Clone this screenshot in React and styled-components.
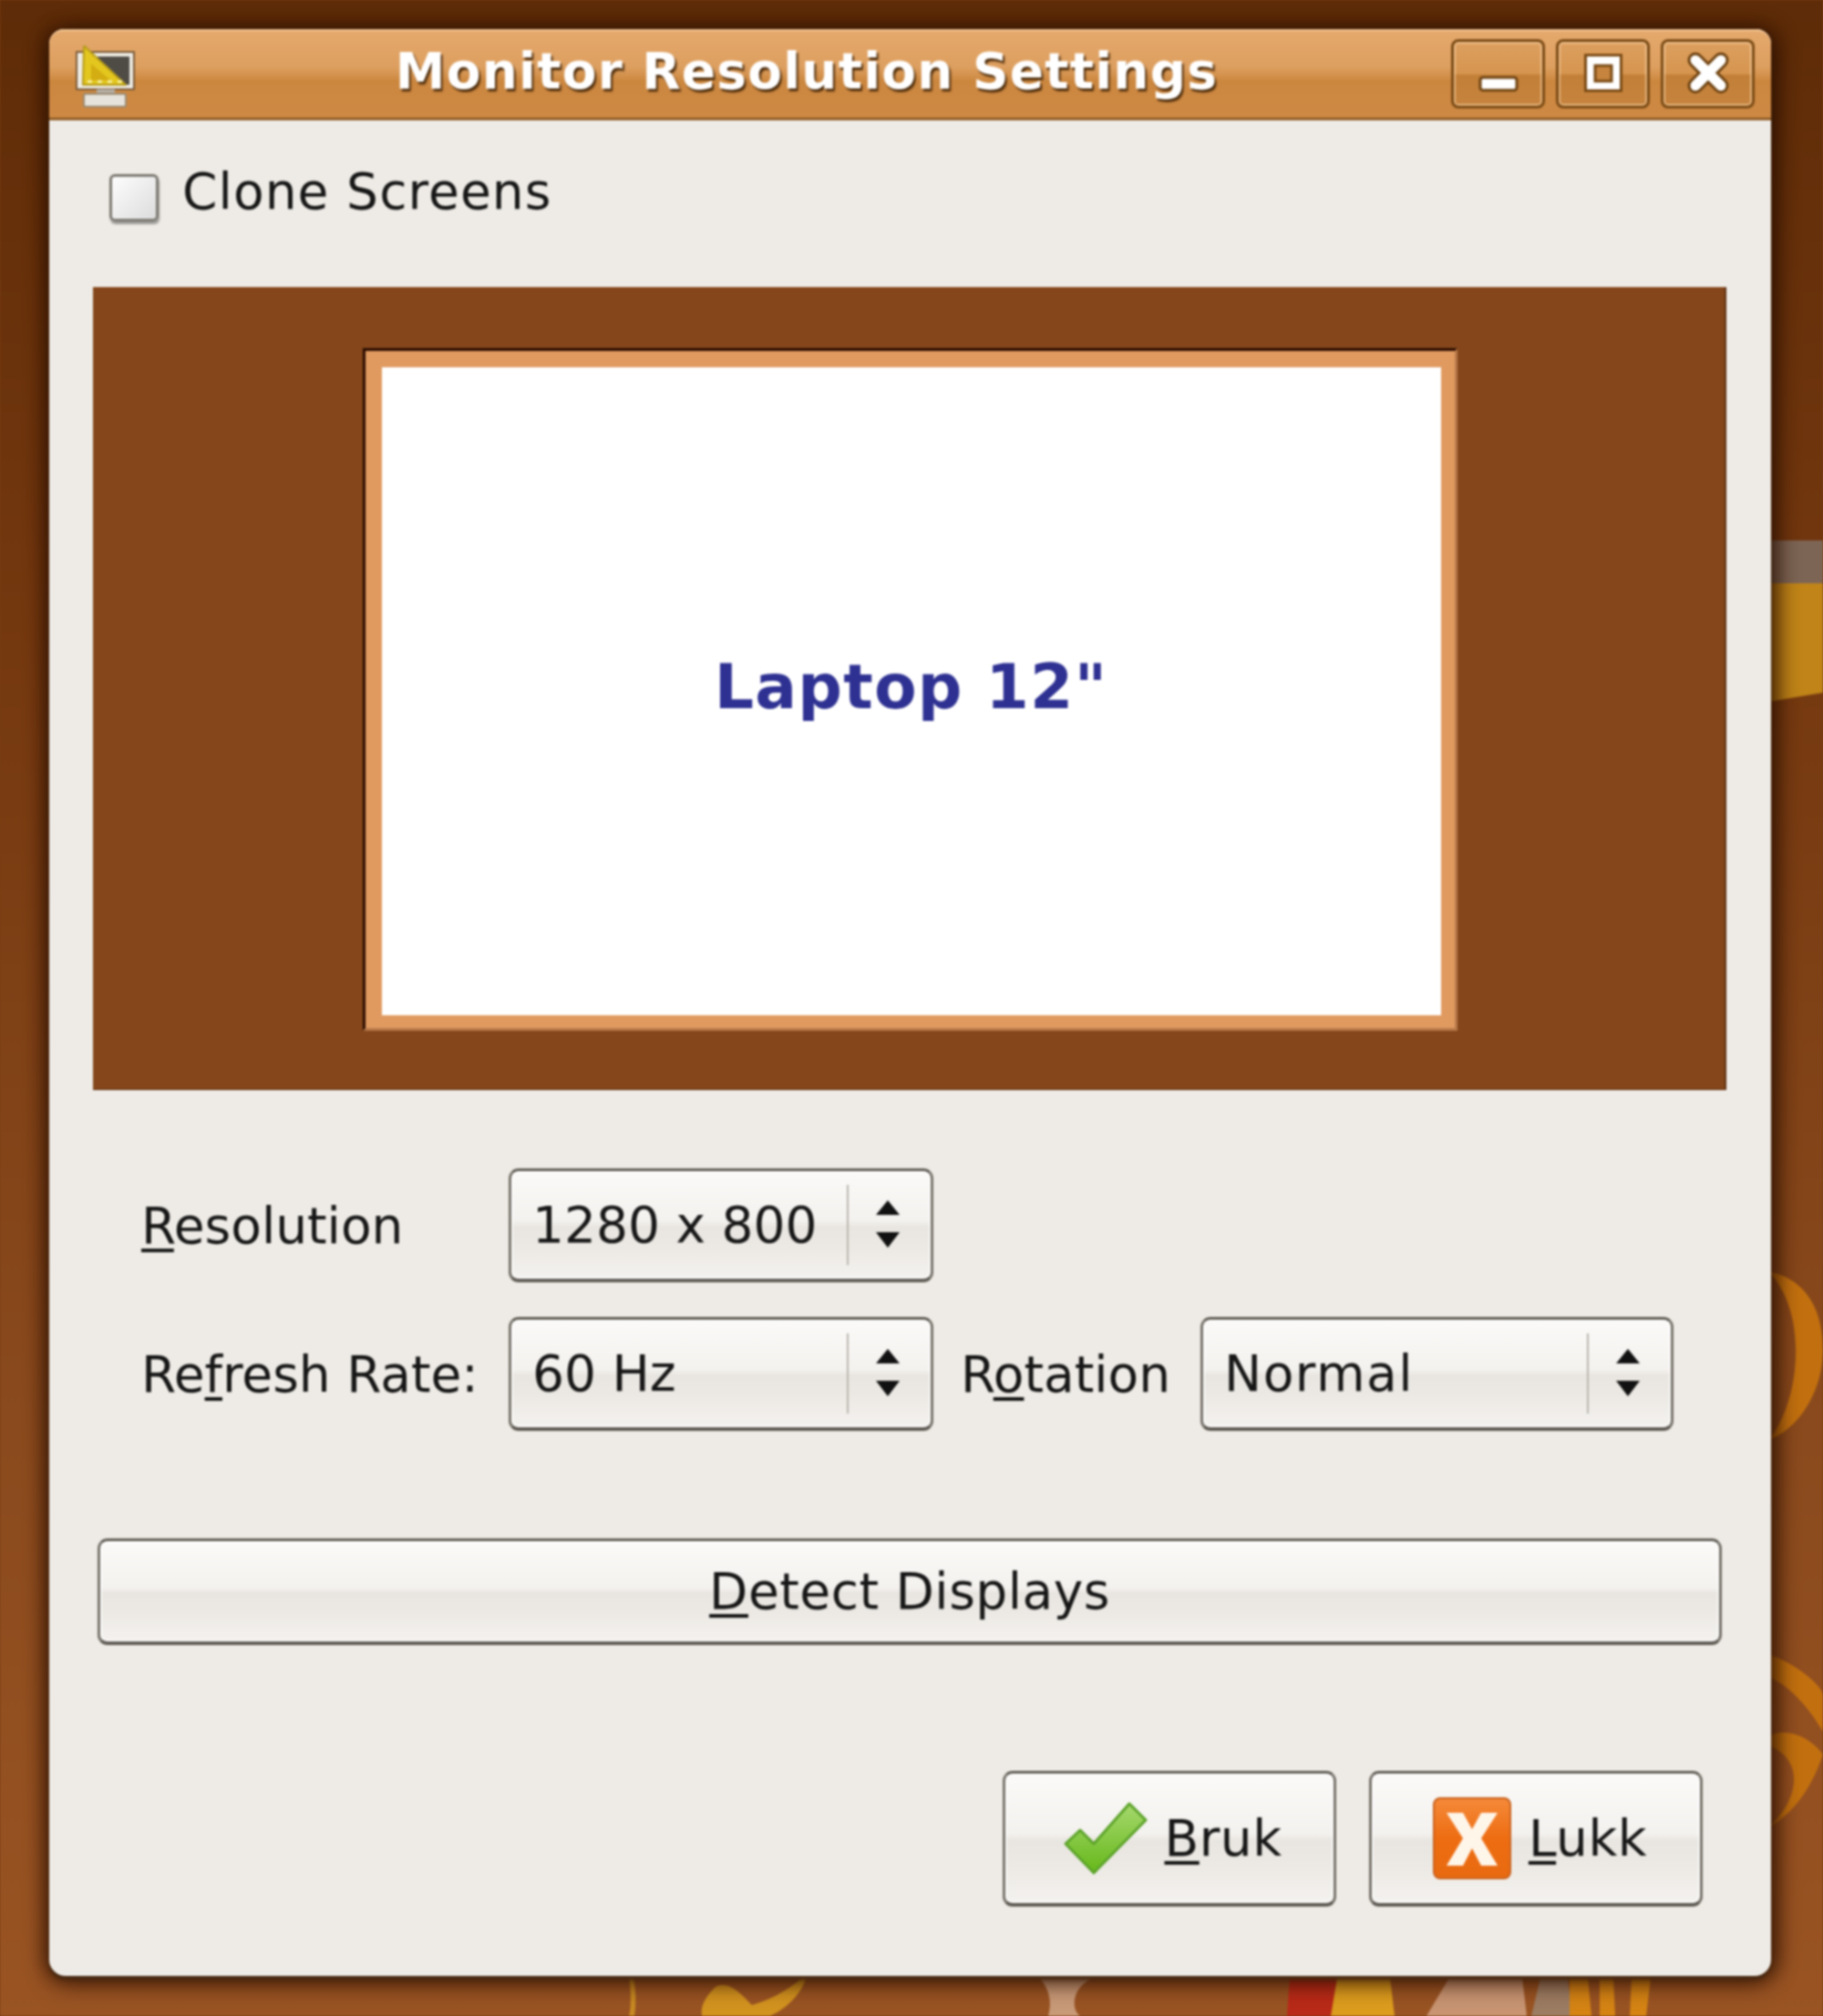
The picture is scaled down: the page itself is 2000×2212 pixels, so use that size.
import React from "react";
import styled, { createGlobalStyle } from "styled-components";

const GlobalStyle = createGlobalStyle`
  html, body {
    margin: 0;
    padding: 0;
    background: #7a3d13;
  }
`;

const Desktop = styled.div`
  position: relative;
  width: 2000px;
  height: 2212px;
  padding: 32px 57px 44px 54px;
  box-sizing: border-box;
  overflow: hidden;
  font-family: "DejaVu Sans", sans-serif;
  color: #161616;
  filter: blur(0.9px);
`;

const Wallpaper = styled.svg`
  position: absolute;
  inset: 0;
`;

const Window = styled.div`
  position: relative;
  height: 2136px;
  display: flex;
  flex-direction: column;
  background: #eeebe6;
  border-radius: 16px 16px 18px 18px;
  box-shadow: 0 4px 3px #4a2a12, 0 8px 26px rgba(40, 15, 0, 0.65), 8px 0 22px rgba(40, 15, 0, 0.6), -6px 0 18px rgba(40, 15, 0, 0.45);
`;

const TitleBar = styled.div`
  height: 100px;
  box-sizing: border-box;
  display: flex;
  align-items: flex-start;
  padding: 9px 18px 0 26px;
  border-radius: 16px 16px 0 0;
  border-top: 2px solid #f0c595;
  border-bottom: 3px solid #8f5c24;
  background: linear-gradient(#e5a96d 0%, #dd9f5f 42%, #cc873f 58%, #ce8a45 100%);
`;

const AppIcon = styled.svg`
  width: 70px;
  height: 70px;
  margin-top: 7px;
  flex: none;
`;

const Title = styled.div`
  flex: 1;
  text-align: center;
  padding-left: 28px;
  font-size: 55px;
  letter-spacing: 1.2px;
  line-height: 70px;
  font-weight: bold;
  color: #fff;
  white-space: nowrap;
  text-shadow: 2px 3px 2px #4a2a0a;
`;

const WindowButtons = styled.div`
  display: flex;
  gap: 12px;
`;

const WindowButton = styled.div`
  width: 103px;
  height: 76px;
  box-sizing: border-box;
  display: flex;
  align-items: center;
  justify-content: center;
  border: 3px solid #7a4a14;
  border-radius: 8px;
  box-shadow: inset 0 0 0 2px rgba(255, 220, 180, 0.55);
  background: linear-gradient(#dd9f5f 0%, #d69650 50%, #c27f38 52%, #c6843e 100%);
`;

const Content = styled.div`
  flex: 1;
  display: flex;
  flex-direction: column;
  padding: 54px 49px 0 48px;
`;

const CheckRow = styled.label`
  display: flex;
  align-items: flex-start;
  gap: 26px;
  padding-left: 18px;
  height: 72px;
  font-size: 55px;
  letter-spacing: 1.1px;
  line-height: 48px;
`;

const CheckBox = styled.span`
  width: 54px;
  height: 52px;
  margin-top: 5px;
  box-sizing: border-box;
  flex: none;
  border: 3px solid #7d7a73;
  border-radius: 6px;
  background: linear-gradient(135deg, #fdfdfd, #dcdcdc);
  box-shadow: 1px 3px 2px rgba(0, 0, 0, 0.35);
`;

const Preview = styled.div`
  margin-top: 57px;
  height: 881px;
  display: flex;
  align-items: center;
  justify-content: center;
  background: #84461a;
  box-shadow: inset -2px 0 0 #5a2c0c, inset 0 -1px 0 #5a2c0c;
`;

const Monitor = styled.div`
  width: 1201px;
  height: 749px;
  box-sizing: border-box;
  margin-top: 1px;
  border: 3px solid #2a0c00;
  border-right-color: #b9794a;
  border-bottom-color: #b9794a;
  display: flex;
`;

const Screen = styled.div`
  flex: 1;
  display: flex;
  align-items: center;
  justify-content: center;
  background: #fff;
  border: solid #e09a60;
  border-width: 18px 15px 14px 18px;
  font-size: 68px;
  letter-spacing: 1.2px;
  font-weight: bold;
  color: #2e3192;
  padding-bottom: 10px;
`;

const Form = styled.div`
  margin-top: 86px;
  padding-left: 53px;
  display: grid;
  grid-template-columns: 403px 466px 293px 519px;
  grid-auto-rows: 125px;
  row-gap: 38px;
  align-items: center;
`;

const Label = styled.span`
  font-size: 55px;
  padding-left: ${(p) => p.$indent || 0}px;
  white-space: nowrap;
`;

const Mnemonic = styled.span`
  text-decoration: underline;
  text-decoration-thickness: 4px;
  text-underline-offset: 6px;
  text-decoration-skip-ink: none;
`;

const raised = `
  box-sizing: border-box;
  border: 3px solid #76726a;
  border-top-color: #5f5b54;
  border-bottom-width: 4px;
  border-bottom-color: #5f5b54;
  border-radius: 11px;
  background: linear-gradient(#fbfaf8 0%, #f4f2ef 46%, #e9e6e1 52%, #ece9e4 70%, #f4f2ef 100%);
  box-shadow: inset 0 0 0 2px rgba(255, 255, 255, 0.7);
`;

const Combo = styled.div`
  ${raised}
  height: 125px;
  display: flex;
  align-items: center;
  padding-left: 23px;
  font-size: 55px;
`;

const ComboText = styled.span`
  flex: 1;
  white-space: nowrap;
  letter-spacing: ${(p) => p.$spacing || 0}px;
`;

const ComboSeparator = styled.span`
  width: 2px;
  height: 88px;
  background: #b9b5ae;
`;

const ComboArrows = styled.svg`
  width: 90px;
  height: 60px;
  flex: none;
`;

const DetectButton = styled.div`
  ${raised}
  margin: 118px 5px 0 5px;
  height: 117px;
  display: flex;
  align-items: center;
  justify-content: center;
  font-size: 55px;
  letter-spacing: 0.5px;
`;

const Actions = styled.div`
  margin-top: 138px;
  padding-right: 26px;
  display: flex;
  justify-content: flex-end;
  gap: 36px;
`;

const ActionButton = styled.div`
  ${raised}
  width: 366px;
  height: 149px;
  display: flex;
  align-items: center;
  justify-content: center;
  gap: 18px;
  padding-left: 8px;
  font-size: 55px;
  letter-spacing: 0.5px;
`;

const ActionIcon = styled.svg`
  width: ${(p) => p.$w}px;
  height: ${(p) => p.$h}px;
  flex: none;
`;

const Arrows = () => (
  <ComboArrows viewBox="0 0 90 60">
    <path d="M43 3 L56 19 H30 Z M30 38 H56 L43 55 Z" fill="#111" />
  </ComboArrows>
);

const ComboBox = ({ children, spacing }) => (
  <Combo>
    <ComboText $spacing={spacing}>{children}</ComboText>
    <ComboSeparator />
    <Arrows />
  </Combo>
);

const App = () => {
  return (
    <Desktop>
      <GlobalStyle />
      <Wallpaper viewBox="0 0 2000 2212" width="2000" height="2212">
        <defs>
          <linearGradient id="wall" x1="0" y1="0" x2="0" y2="1">
            <stop offset="0" stopColor="#5e2c08" />
            <stop offset="0.3" stopColor="#74380f" />
            <stop offset="0.7" stopColor="#8a4a1d" />
            <stop offset="1" stopColor="#9a5423" />
          </linearGradient>
        </defs>
        <rect width="2000" height="2212" fill="url(#wall)" />
        <path d="M1940 593 H2000 V640 H1940 Z" fill="#7d6555" />
        <path d="M1940 640 H2000 V760 L1940 770 Z" fill="#c08418" />
        <path d="M1940 1395 C1990 1405 2000 1450 2000 1480 C2000 1530 1970 1570 1940 1580 C1975 1540 1985 1440 1940 1395 Z" fill="#c2700f" />
        <path d="M1940 1815 C1970 1825 2000 1850 2000 1860 V1900 C1985 1875 1965 1850 1940 1840 Z" fill="#c2700f" />
        <path d="M1940 1905 C1960 1895 1985 1905 2000 1925 C1985 1970 1960 1995 1940 2005 C1975 1975 1980 1930 1940 1915 Z" fill="#c2700f" />
        <path d="M690 2170 C693 2190 692 2205 690 2212 H696 C698 2200 698 2185 695 2170 Z" fill="#c88a22" />
        <path d="M785 2180 C800 2172 815 2190 825 2200 C860 2190 880 2170 886 2165 C880 2190 860 2205 845 2212 H770 C768 2200 775 2190 785 2180 Z" fill="#d3931f" />
        <path d="M1140 2170 H1200 C1175 2180 1175 2205 1185 2212 H1150 C1155 2195 1150 2180 1140 2170 Z" fill="#c99a78" />
        <path d="M1415 2170 H1467 L1462 2212 H1412 Z" fill="#b92a18" />
        <path d="M1467 2170 H1525 L1530 2212 H1460 Z" fill="#dc9c1e" />
        <path d="M1590 2170 H1670 L1675 2212 H1565 Z" fill="#c89472" />
        <path d="M1690 2170 H1720 L1725 2212 H1680 Z" fill="#9c7c62" />
        <path d="M1722 2170 H1742 L1746 2212 H1722 Z M1755 2170 H1770 L1772 2212 H1755 Z M1790 2170 H1811 L1806 2212 H1788 Z" fill="#d58414" />
      </Wallpaper>
      <Window>
        <TitleBar>
          <AppIcon viewBox="0 0 70 70">
            <rect x="4" y="7" width="63" height="41" fill="#efece4" stroke="#7a5a38" strokeWidth="2" />
            <rect x="27" y="12" width="35" height="31" fill="#4f4c46" />
            <rect x="26" y="48" width="20" height="5" fill="#b5afa5" />
            <rect x="12" y="53" width="46" height="14" rx="2" fill="#e6e3dc" stroke="#9a8a72" strokeWidth="2" />
            <path d="M12 0 L58 43 H11 Z" fill="#e3c61e" stroke="#b59a1a" strokeWidth="2" strokeLinejoin="round" />
            <path d="M20 20 L41 38 H20 Z" fill="#d3ad12" />
            <path d="M16 39.500 H56" stroke="#f6ec9a" strokeWidth="3" strokeDasharray="5 6" />
          </AppIcon>
          <Title>Monitor Resolution Settings</Title>
          <WindowButtons>
            <WindowButton>
              <svg width="60" height="60" viewBox="0 0 60 60">
                <rect x="10" y="34" width="40" height="14" rx="3" fill="#fff" stroke="#6e4210" strokeWidth="3" />
              </svg>
            </WindowButton>
            <WindowButton>
              <svg width="60" height="60" viewBox="0 0 60 60">
                <rect x="9" y="8" width="42" height="42" fill="#7a4a14" />
                <rect x="12" y="11" width="36" height="36" fill="#fff" />
                <rect x="21" y="21" width="18" height="17" fill="#c6843e" stroke="#7a4a14" strokeWidth="3" />
              </svg>
            </WindowButton>
            <WindowButton>
              <svg width="60" height="60" viewBox="0 0 60 60">
                <path d="M16 15 L44 43 M44 15 L16 43" stroke="#6e4210" strokeWidth="17" strokeLinecap="round" />
                <path d="M16 15 L44 43 M44 15 L16 43" stroke="#fff" strokeWidth="11" strokeLinecap="round" />
              </svg>
            </WindowButton>
          </WindowButtons>
        </TitleBar>
        <Content>
          <CheckRow>
            <CheckBox />
            Clone Screens
          </CheckRow>
          <Preview>
            <Monitor>
              <Screen>Laptop 12"</Screen>
            </Monitor>
          </Preview>
          <Form>
            <Label><Mnemonic>R</Mnemonic>esolution</Label>
            <ComboBox>1280 x 800</ComboBox>
            <span />
            <span />
            <Label>Re<Mnemonic>f</Mnemonic>resh Rate:</Label>
            <ComboBox>60 Hz</ComboBox>
            <Label $indent={30}>R<Mnemonic>o</Mnemonic>tation</Label>
            <ComboBox spacing={1.5}>Normal</ComboBox>
          </Form>
          <DetectButton>
            <span><Mnemonic>D</Mnemonic>etect Displays</span>
          </DetectButton>
          <Actions>
            <ActionButton>
              <ActionIcon $w={92} $h={80} viewBox="0 0 92 80">
                <defs>
                  <linearGradient id="tick" x1="0" y1="0" x2="0" y2="1">
                    <stop offset="0" stopColor="#a6d86e" />
                    <stop offset="1" stopColor="#66b81a" />
                  </linearGradient>
                </defs>
                <path d="M2 46 L18 31 L33 46 L72 2 L90 20 L33 78 Z" fill="url(#tick)" stroke="#5ca32a" strokeWidth="3" strokeLinejoin="round" />
              </ActionIcon>
              <span><Mnemonic>B</Mnemonic>ruk</span>
            </ActionButton>
            <ActionButton>
              <ActionIcon $w={88} $h={92} viewBox="0 0 88 92">
                <defs>
                  <linearGradient id="stop" x1="0" y1="0" x2="0" y2="1">
                    <stop offset="0" stopColor="#f58a3a" />
                    <stop offset="0.5" stopColor="#ee6d12" />
                    <stop offset="1" stopColor="#e86a10" />
                  </linearGradient>
                </defs>
                <rect x="2" y="2" width="84" height="88" rx="7" fill="url(#stop)" stroke="#c9601c" strokeWidth="2" />
                <path d="M16 18 H34 L44 36 L54 18 H72 L54 46 L72 76 H54 L44 57 L34 76 H16 L34 46 Z" fill="#fff6ea" />
              </ActionIcon>
              <span><Mnemonic>L</Mnemonic>ukk</span>
            </ActionButton>
          </Actions>
        </Content>
      </Window>
    </Desktop>
  );
};

export default App;
